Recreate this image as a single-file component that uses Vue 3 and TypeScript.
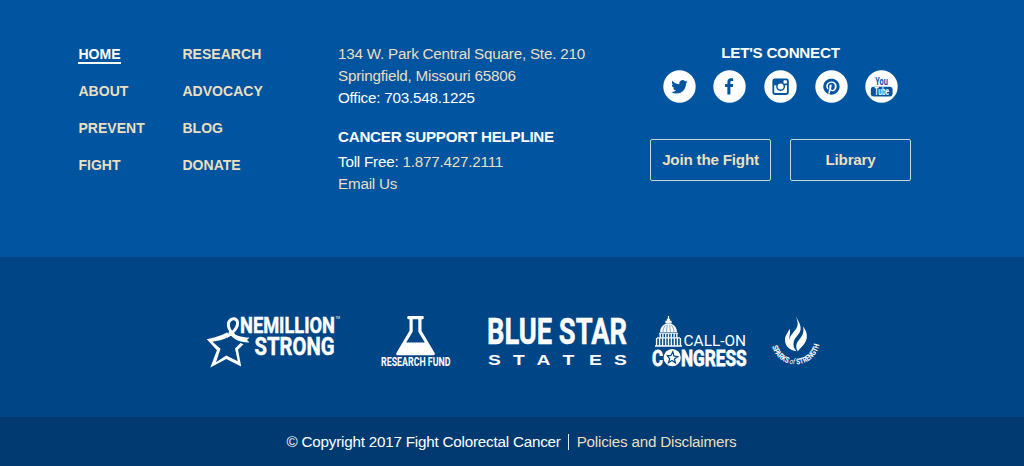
<script setup lang="ts">
interface NavItem {
  label: string
  active?: boolean
}

const navColumns: NavItem[][] = [
  [{ label: 'HOME', active: true }, { label: 'ABOUT' }, { label: 'PREVENT' }, { label: 'FIGHT' }],
  [{ label: 'RESEARCH' }, { label: 'ADVOCACY' }, { label: 'BLOG' }, { label: 'DONATE' }],
]

const buttons: string[] = ['Join the Fight', 'Library']
</script>

<template>
  <footer class="footer">
    <section class="main">
      <nav class="nav">
        <ul v-for="(column, i) in navColumns" :key="i" class="nav-col">
          <li v-for="item in column" :key="item.label">
            <a class="nav-link" :class="{ active: item.active }">{{ item.label }}</a>
          </li>
        </ul>
      </nav>

      <div class="contact">
        <p><a class="link">134 W. Park Central Square, Ste. 210</a></p>
        <p><a class="link">Springfield, Missouri 65806</a></p>
        <p>Office: 703.548.1225</p>
        <h4 class="helpline">CANCER SUPPORT HELPLINE</h4>
        <p>Toll Free: <a class="link">1.877.427.2111</a></p>
        <p><a class="link">Email Us</a></p>
      </div>

      <div class="connect">
        <h4 class="connect-title">LET'S CONNECT</h4>
        <div class="social">
          <svg class="icon" viewBox="0 0 33 33" aria-label="Twitter">
            <circle class="white" cx="16.5" cy="16.5" r="16.2" />
            <path class="ink" transform="translate(8.3 8.6) scale(.68)" d="M23.953 4.57a10 10 0 01-2.825.775 4.958 4.958 0 002.163-2.723c-.951.555-2.005.959-3.127 1.184a4.92 4.92 0 00-8.384 4.482C7.69 8.095 4.067 6.13 1.64 3.162a4.822 4.822 0 00-.666 2.475c0 1.71.87 3.213 2.188 4.096a4.904 4.904 0 01-2.228-.616v.06a4.923 4.923 0 003.946 4.827 4.996 4.996 0 01-2.212.085 4.936 4.936 0 004.604 3.417 9.867 9.867 0 01-6.102 2.105c-.39 0-.779-.023-1.17-.067a13.995 13.995 0 007.557 2.209c9.053 0 13.998-7.496 13.998-13.985 0-.21 0-.42-.015-.63A9.935 9.935 0 0024 4.59z" />
          </svg>
          <svg class="icon" viewBox="0 0 33 33" aria-label="Facebook">
            <circle class="white" cx="16.5" cy="16.5" r="16.2" />
            <path class="ink" d="M14.400 24.600V17h-2.300v-3h2.300v-2c0-2.500 1.400-3.700 3.600-3.700 1 0 1.900.1 2.200.1v2.700h-1.500c-1 0-1.300.5-1.300 1.300V14h2.800l-.4 3h-2.400v7.600z" />
          </svg>
          <svg class="icon" viewBox="0 0 33 33" aria-label="Instagram">
            <circle class="white" cx="16.5" cy="16.5" r="16.2" />
            <rect class="ink" x="8.4" y="8.6" width="16.4" height="16.4" rx="2.4" />
            <path class="white" d="M10.200 15.200h2.100a4.500 4.500 0 1 0 8.600 0h2.100v6.900a1 1 0 0 1-1 1H11.200a1 1 0 0 1-1-1z" />
            <circle class="white" cx="16.6" cy="16.6" r="3" />
            <rect class="white" x="19.5" y="10.3" width="3.4" height="3.2" rx=".6" />
          </svg>
          <svg class="icon" viewBox="0 0 33 33" aria-label="Pinterest">
            <circle class="white" cx="16.5" cy="16.5" r="16.2" />
            <path class="ink" transform="translate(8.3 8.4) scale(.68)" d="M12.017 0C5.396 0 .029 5.367.029 11.987c0 5.079 3.158 9.417 7.618 11.162-.105-.949-.199-2.403.041-3.439.219-.937 1.406-5.957 1.406-5.957s-.359-.72-.359-1.781c0-1.663.967-2.911 2.168-2.911 1.024 0 1.518.769 1.518 1.688 0 1.029-.653 2.567-.992 3.992-.285 1.193.6 2.165 1.775 2.165 2.128 0 3.768-2.245 3.768-5.487 0-2.861-2.063-4.869-5.008-4.869-3.41 0-5.409 2.562-5.409 5.199 0 1.033.394 2.143.889 2.741.099.12.112.225.085.345-.09.375-.293 1.199-.334 1.363-.053.225-.172.271-.401.165-1.495-.69-2.433-2.878-2.433-4.646 0-3.776 2.748-7.252 7.92-7.252 4.158 0 7.392 2.967 7.392 6.923 0 4.135-2.607 7.462-6.233 7.462-1.214 0-2.354-.629-2.758-1.379l-.749 2.848c-.269 1.045-1.004 2.352-1.498 3.146 1.123.345 2.306.535 3.55.535 6.607 0 11.985-5.365 11.985-11.987C23.97 5.39 18.592.026 11.985.026L12.017 0z" />
          </svg>
          <svg class="icon" viewBox="0 0 33 33" aria-label="YouTube">
            <circle class="white" cx="16.5" cy="16.5" r="16.2" />
            <text class="ink yt" x="10.200" y="15" textLength="12.6" lengthAdjust="spacingAndGlyphs">You</text>
            <rect class="ink" x="5.800" y="16.800" width="21.8" height="9.8" rx="3" />
            <text class="white yt tube" x="9.600" y="25" textLength="14.4" lengthAdjust="spacingAndGlyphs">Tube</text>
          </svg>
        </div>
        <div class="buttons">
          <a v-for="b in buttons" :key="b" class="button">{{ b }}</a>
        </div>
      </div>
    </section>

    <section class="logos">
      <svg class="logo one-million" viewBox="0 0 136 60" aria-label="One Million Strong">
        <path class="white" fill-rule="evenodd" d="M.8 27.300C8 25.800 15 23.800 21 20.500L25 23.500C21 26.500 13 28.800 6.500 29.800L14.500 36.800L10 50.300L20.200 43.500L31.800 49.200L29 36.500L34.500 31L37.500 32.200L32 37.800L35.200 54.500L20.300 47L4.300 55.500L10.900 38.200z" />
        <path class="line" stroke-width="3" d="M20.500 24.500C27.500 21 32.800 14.500 31.300 9.300C29.500 4.800 23.500 6.600 22.400 11.300C21.800 15.500 24.300 19.500 28 23" />
        <path class="white" d="M24 17.500C28 23.500 35 25.500 43.500 25.500L41 28L43.500 30.400C34 30.800 27 27.500 22.500 20.500z" />
        <text class="white heavy thick" x="34" y="20.900" font-size="22.300" textLength="95" lengthAdjust="spacingAndGlyphs">NEMILLION</text>
        <text class="white heavy thick" x="48.500" y="43.100" font-size="25.700" textLength="80" lengthAdjust="spacingAndGlyphs">STRONG</text>
        <text class="white tm" x="129.500" y="6.500">TM</text>
      </svg>

      <svg class="logo research" viewBox="0 0 72 60" aria-label="Research Fund">
        <path class="white" fill-rule="evenodd" d="M28.300 4h14.400q1 0 1 1v1.200q0 1-1 1h-1.200v11.600L54.500 40.800q1.200 2.400-1.300 2.400H17.800q-2.500 0-1.300-2.400L29.500 18.800V7.200h-1.200q-1 0-1-1V5q0-1 1-1zM32.700 7.200v12.600L26.200 30.500h18.600L38.300 19.800V7.200z" />
        <text class="white heavy" x="1" y="54.400" font-size="12" textLength="69.500" lengthAdjust="spacingAndGlyphs">RESEARCH FUND</text>
      </svg>

      <svg class="logo blue-star" viewBox="0 0 142 60" aria-label="Blue Star States">
        <text class="white heavy thick" x="0" y="32.300" font-size="36.500" textLength="140" lengthAdjust="spacingAndGlyphs">BLUE STAR</text>
        <g class="white states" transform="translate(0 53) scale(1.35 1)">
          <text x=".7">S</text>
          <text x="19.200">T</text>
          <text x="36.600">A</text>
          <text x="56">T</text>
          <text x="75.600">E</text>
          <text x="94">S</text>
        </g>
      </svg>

      <svg class="logo congress" viewBox="0 0 98 60" aria-label="Call-On Congress">
        <path class="white" d="M16.900 4h1.200v2.800h1v2h1.500v2.700h-6.200v-2.700h1.500v-2h1z" />
        <path class="white" d="M9 20.300c.3-5.500 3.800-8.800 8.500-8.800s8.200 3.300 8.500 8.800z" />
        <path class="rib" d="M12 19.800c.3-3 1.200-5 2.500-6.500M15.600 19.800l.6-7M19.400 19.800l-.6-7M23 19.800c-.3-3-1.200-5-2.500-6.500" />
        <path class="white" d="M8 20.700h19v1H8zM6 25.200h23v1.300H6zM4 33.300h27v1.500H4z" />
        <path class="line" stroke-width="1.400" d="M9.200 21.500v4M11.900 21.500v4M14.700 21.500v4M17.500 21.500v4M20.300 21.500v4M23.100 21.500v4M25.800 21.500v4M5.600 26v8M8.600 26v8M11.600 26v8M14.600 26v8M17.500 26v8M20.400 26v8M23.400 26v8M26.400 26v8M29.400 26v8" />
        <text class="white thin" x="32.600" y="33.700" font-size="14" textLength="62.500" lengthAdjust="spacingAndGlyphs">CALL-ON</text>
        <text class="white heavy thicker" x="1" y="53.500" font-size="21.700" textLength="11" lengthAdjust="spacingAndGlyphs">C</text>
        <circle class="white" cx="21.200" cy="45.700" r="8.600" />
        <path class="star" d="M16.200 43.500l3.600.2 2-4 1 4.200 4 .8-3.400 2.200 1 4-3.400-2.400-3.500 2.200 1.200-3.800z" />
        <text class="white heavy thicker" x="30" y="53.500" font-size="21.700" textLength="65.600" lengthAdjust="spacingAndGlyphs">NGRESS</text>
      </svg>

      <svg class="logo sparks" viewBox="0 0 54 60" aria-label="Sparks of Strength">
        <path class="white" d="M27.200 4.600C28.500 9 32.200 12 31.600 17.500C31 22 26 25 24.800 29.500C23.800 33.500 25 37 27.600 39.300C21 38.600 15.700 34 16 27.500C16.300 23 19.300 20.300 20.500 16.800C22 20.600 20 24.500 20.200 28C21 22 28.300 18 28.700 12.500C28.900 9.500 27.600 7.500 27.200 4.600z" />
        <path class="white" d="M34 14.500C37.700 19 38.900 24 36.900 29C35.300 33 31.500 35.500 28.800 39.300C26.300 35.500 27 31.500 29.700 28.300C32.700 24.700 35.500 21 34 14.500z" />
        <path id="spark-arc" fill="none" d="M3.200 34.500A24.200 24.200 0 0 0 50.500 32" />
        <text class="white heavy" font-size="8"><textPath href="#spark-arc" textLength="65" lengthAdjust="spacingAndGlyphs">SPARKS <tspan class="of">of</tspan> STRENGTH</textPath></text>
      </svg>
    </section>

    <section class="legal">
      <span class="copyright">© Copyright 2017 Fight Colorectal Cancer</span>
      <a class="link policies">Policies and Disclaimers</a>
    </section>
  </footer>
</template>

<style>
body {
  margin: 0;
}
</style>

<style scoped>
.footer {
  width: 1024px;
  height: 466px;
  overflow: hidden;
  color: #fff;
  font: 15.2px/22px "Liberation Sans", Arial, sans-serif;
  letter-spacing: -0.2px;
}
.main {
  box-sizing: border-box;
  display: flex;
  height: 257px;
  padding: 43px 0 0 78px;
  background: #0054a0;
}
.nav {
  display: flex;
  width: 260px;
}
.nav-col {
  width: 104px;
  margin: 0;
  padding: 0 0 0 0.4px;
  box-sizing: border-box;
  list-style: none;
}
.nav-col li {
  height: 37px;
}
.nav-link {
  display: inline-block;
  color: #eadfbf;
  font-size: 14px;
  font-weight: bold;
  letter-spacing: 0.05px;
  line-height: 16px;
}
.nav-link.active {
  color: #fff;
  border-bottom: 2px solid #fff;
}
.contact {
  width: 312px;
}
.contact p {
  margin: 0;
}
.link {
  color: #eadfbf;
}
h4 {
  margin: 0;
  font-size: 15.2px;
  font-weight: bold;
  letter-spacing: -0.26px;
}
.helpline {
  margin: 17px 0 3px;
}
.connect {
  width: 261px;
}
.connect-title {
  margin-top: -1px;
  text-align: center;
}
.social {
  display: flex;
  justify-content: center;
  gap: 17.7px;
  margin-top: 6.4px;
}
.icon {
  width: 33px;
  height: 33px;
  letter-spacing: 0;
}
.white {
  fill: #fff;
}
.ink {
  fill: #0054a0;
}
.yt {
  font: bold 10.5px Roboto, sans-serif;
}
.tube {
  font-size: 10px;
}
.buttons {
  display: flex;
  gap: 19px;
  margin-top: 35.6px;
}
.button {
  box-sizing: border-box;
  width: 121px;
  height: 42px;
  border: 1px solid #c9d8d4;
  border-radius: 2px;
  color: #eadfbf;
  font-weight: bold;
  line-height: 40px;
  text-align: center;
}
.logos {
  box-sizing: border-box;
  display: flex;
  height: 160px;
  padding: 55px 0 0 206px;
  background: #004586;
}
.logo {
  flex: none;
  height: 60px;
  overflow: visible;
  letter-spacing: 0;
}
.one-million {
  width: 136px;
}
.research {
  width: 72px;
  margin-left: 38px;
}
.blue-star {
  width: 142px;
  margin-left: 35px;
}
.congress {
  width: 98px;
  margin-left: 22px;
}
.sparks {
  width: 54px;
  margin-left: 20px;
}
.heavy {
  font-family: Roboto, sans-serif;
  font-weight: bold;
}
.thick {
  stroke: #fff;
  stroke-width: 0.5;
}
.thicker {
  stroke: #fff;
  stroke-width: 0.8;
}
.thin {
  font-family: Roboto, sans-serif;
}
.tm {
  font: 3px Roboto, sans-serif;
}
.states {
  font: bold 14.3px "Liberation Sans", sans-serif;
}
.of {
  font-weight: normal;
  font-style: italic;
}
.line {
  fill: none;
  stroke: #fff;
}
.rib {
  fill: none;
  stroke: #004586;
  stroke-width: 0.5;
}
.star {
  fill: none;
  stroke: #004586;
  stroke-width: 1.2;
}
.legal {
  display: flex;
  justify-content: center;
  align-items: center;
  height: 49px;
  padding-right: 1px;
  box-sizing: border-box;
  background: #003a70;
}
.copyright {
  margin-right: 8px;
  padding-right: 7px;
  border-right: 1px solid #dfe6ea;
  line-height: 16px;
}
</style>
